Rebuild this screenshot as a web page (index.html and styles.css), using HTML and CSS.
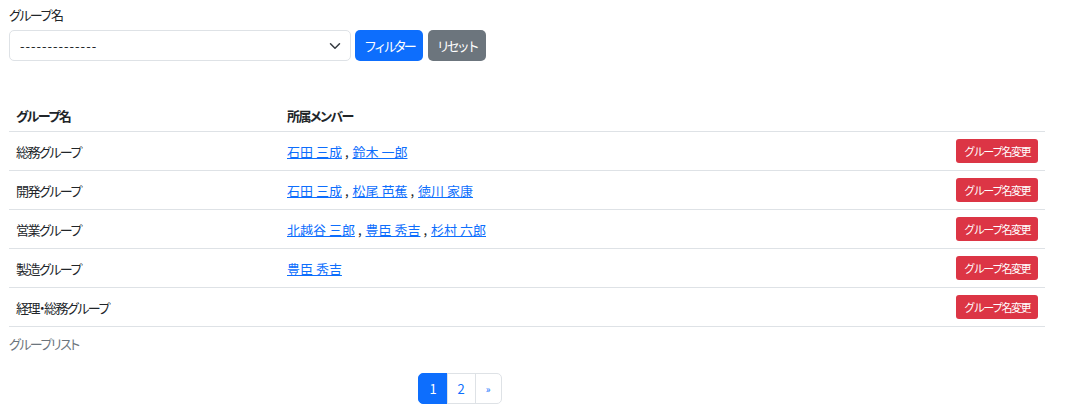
FILE: index.html
```html
<!DOCTYPE html>
<html>
  <head>
    <link rel="stylesheet" href="styles.css">
  </head>
  <body>
    <form class="filter-form">
      <label class="form-label kana" for="groupName">グループ名</label>
      <div class="filter-row">
        <div class="select-wrap">
          <select id="groupName" class="form-select">
            <option>--------------</option>
          </select>
          <svg class="chevron" width="12" height="12" viewBox="0 0 16 16"><path d="M2 5l6 6 6-6" fill="none" stroke="#343a40" stroke-width="2" stroke-linecap="round" stroke-linejoin="round"/></svg>
        </div>
        <button type="submit" class="btn btn-primary">フィルター</button>
        <button type="reset" class="btn btn-secondary">リセット</button>
      </div>
    </form>
    <table class="table">
      <caption class="kana">グループリスト</caption>
      <thead>
        <tr>
          <th class="col-name kana">グループ名</th>
          <th class="kana">所属メンバー</th>
          <th></th>
        </tr>
      </thead>
      <tbody>
        <tr>
          <td class="kana">総務グループ</td>
          <td><a href="#">石田 三成</a><span class="sep">,</span><a href="#">鈴木 一郎</a></td>
          <td class="actions"><button class="btn btn-danger btn-sm kana">グループ名変更</button></td>
        </tr>
        <tr>
          <td class="kana">開発グループ</td>
          <td><a href="#">石田 三成</a><span class="sep">,</span><a href="#">松尾 芭蕉</a><span class="sep">,</span><a href="#">徳川 家康</a></td>
          <td class="actions"><button class="btn btn-danger btn-sm kana">グループ名変更</button></td>
        </tr>
        <tr>
          <td class="kana">営業グループ</td>
          <td><a href="#">北越谷 三郎</a><span class="sep">,</span><a href="#">豊臣 秀吉</a><span class="sep">,</span><a href="#">杉村 六郎</a></td>
          <td class="actions"><button class="btn btn-danger btn-sm kana">グループ名変更</button></td>
        </tr>
        <tr>
          <td class="kana">製造グループ</td>
          <td><a href="#">豊臣 秀吉</a></td>
          <td class="actions"><button class="btn btn-danger btn-sm kana">グループ名変更</button></td>
        </tr>
        <tr>
          <td class="kana">経理・総務グループ</td>
          <td></td>
          <td class="actions"><button class="btn btn-danger btn-sm kana">グループ名変更</button></td>
        </tr>
      </tbody>
    </table>
    <nav class="pager">
      <ul class="pagination">
        <li class="page-item active"><a class="page-link" href="#">1</a></li>
        <li class="page-item"><a class="page-link" href="#">2</a></li>
        <li class="page-item"><a class="page-link next" href="#">&raquo;</a></li>
      </ul>
    </nav>
  </body>
</html>
```

FILE: styles.css
```css
body {
  margin: 0;
  padding: 5px 30px 0 9px;
  font-family: "Noto Sans CJK JP", "Noto Sans", sans-serif;
  font-feature-settings: "palt";
  font-size: 13px;
  line-height: 19px;
  color: #212529;
}
.kana {
  letter-spacing: -1.5px;
}
.form-label {
  display: block;
  margin-bottom: 6px;
}
.filter-row {
  display: flex;
  gap: 4px;
}
.select-wrap {
  position: relative;
  width: 342px;
}
.form-select {
  width: 100%;
  height: 31px;
  padding: 0 30px 0 10px;
  font: inherit;
  letter-spacing: 1px;
  color: #212529;
  background: #fff;
  border: 1px solid #dee2e6;
  border-radius: 5px;
  appearance: none;
}
.chevron {
  position: absolute;
  right: 10px;
  top: 10px;
  pointer-events: none;
}
.btn {
  height: 31px;
  padding: 0 8px;
  font-family: inherit;
  font-size: 13px;
  letter-spacing: -3px;
  color: #fff;
  border: 1px solid transparent;
  border-radius: 5px;
}
.btn-primary {
  background: #0d6efd;
}
.btn-secondary {
  background: #6c757d;
  margin-left: 1px;
}
.btn-danger {
  background: #dc3545;
}
.btn-sm {
  height: 24px;
  padding: 0 7px;
  font-size: 11px;
  letter-spacing: -1.5px;
  border-radius: 3px;
}
.table {
  width: 1036px;
  margin-top: 39px;
  border-collapse: collapse;
  caption-side: bottom;
}
.table caption {
  text-align: left;
  color: #6c757d;
  padding: 7px 0;
}
.table th,
.table td {
  text-align: left;
  padding: 6px 7px;
  border-bottom: 1px solid #dee2e6;
}
.table th {
  height: 19px;
  font-weight: bold;
}
.table td {
  height: 26px;
}
.col-name {
  width: 257px;
}
.table .actions {
  text-align: right;
}
a {
  color: #0d6efd;
}
.sep {
  margin: 0 4px 0 3px;
}
.pager {
  width: 903px;
  margin-top: 13px;
}
.pagination {
  display: flex;
  justify-content: center;
  list-style: none;
  margin: 0;
  padding: 0;
}
.page-link {
  display: block;
  padding: 5px 10px;
  line-height: 19px;
  color: #0d6efd;
  text-decoration: none;
  border: 1px solid #dee2e6;
  margin-left: -1px;
}
.page-item:first-child .page-link {
  border-top-left-radius: 5px;
  border-bottom-left-radius: 5px;
}
.page-item:last-child .page-link {
  border-top-right-radius: 5px;
  border-bottom-right-radius: 5px;
}
.page-item.active .page-link {
  color: #fff;
  background: #0d6efd;
  border-color: #0d6efd;
}
.page-link.next {
  font-size: 10px;
}
```
